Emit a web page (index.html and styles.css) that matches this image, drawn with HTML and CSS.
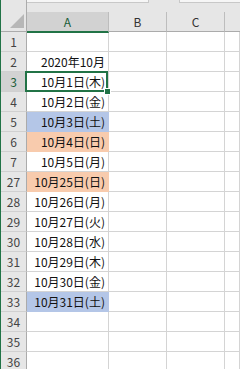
FILE: index.html
```html
<!DOCTYPE html>
<html lang="ja">
<head>
    <meta charset="UTF-8">
    <meta name="viewport" content="width=device-width, initial-scale=1.0">
    <title>2020年10月</title>
    <link rel="stylesheet" href="styles.css">
</head>
<body>
    <div class="window">
        <div class="topbar">
            <span class="fx-box"></span>
            <span class="fx-gap"></span>
            <span class="fx-box right"></span>
        </div>

        <div class="sheet">
            <!-- column headers -->
            <div class="corner">
                <svg width="14" height="14" viewBox="0 0 14 14"><polygon points="14,0 14,14 0,14" fill="#b7b7b7"/></svg>
            </div>
            <div class="col-head active">A</div>
            <div class="col-head">B</div>
            <div class="col-head">C</div>
            <div class="col-head last"></div>

            <div class="row-head">1</div><div class="cell"></div><div class="cell"></div><div class="cell"></div><div class="cell"></div>
            <div class="row-head">2</div><div class="cell">2020年10月</div><div class="cell"></div><div class="cell"></div><div class="cell"></div>
            <div class="row-head active">3</div><div class="cell selected">10月1日(木)<span class="sel-box"><span class="handle"></span></span></div><div class="cell"></div><div class="cell"></div><div class="cell"></div>
            <div class="row-head">4</div><div class="cell">10月2日(金)</div><div class="cell"></div><div class="cell"></div><div class="cell"></div>
            <div class="row-head">5</div><div class="cell sat">10月3日(土)</div><div class="cell"></div><div class="cell"></div><div class="cell"></div>
            <div class="row-head">6</div><div class="cell sun">10月4日(日)</div><div class="cell"></div><div class="cell"></div><div class="cell"></div>
            <div class="row-head">7</div><div class="cell">10月5日(月)</div><div class="cell"></div><div class="cell"></div><div class="cell"></div>
            <div class="row-head">27</div><div class="cell sun">10月25日(日)</div><div class="cell"></div><div class="cell"></div><div class="cell"></div>
            <div class="row-head">28</div><div class="cell">10月26日(月)</div><div class="cell"></div><div class="cell"></div><div class="cell"></div>
            <div class="row-head">29</div><div class="cell">10月27日(火)</div><div class="cell"></div><div class="cell"></div><div class="cell"></div>
            <div class="row-head">30</div><div class="cell">10月28日(水)</div><div class="cell"></div><div class="cell"></div><div class="cell"></div>
            <div class="row-head">31</div><div class="cell">10月29日(木)</div><div class="cell"></div><div class="cell"></div><div class="cell"></div>
            <div class="row-head">32</div><div class="cell">10月30日(金)</div><div class="cell"></div><div class="cell"></div><div class="cell"></div>
            <div class="row-head">33</div><div class="cell sat">10月31日(土)</div><div class="cell"></div><div class="cell"></div><div class="cell"></div>
            <div class="row-head">34</div><div class="cell"></div><div class="cell"></div><div class="cell"></div><div class="cell"></div>
            <div class="row-head">35</div><div class="cell"></div><div class="cell"></div><div class="cell"></div><div class="cell"></div>
            <div class="row-head">36</div><div class="cell"></div><div class="cell"></div><div class="cell"></div><div class="cell"></div>
        </div>
    </div>
</body>
</html>
```

FILE: styles.css
```css
html, body {
    margin: 0;
    height: 100%;
    overflow: hidden;
    background: #fff;
}

body {
    font-family: "Noto Sans CJK JP", "Noto Sans", sans-serif;
    font-size: 12px;
    color: #222;
}

.window {
    height: 100%;
    border-left: 1px solid #217346;
    background: #fff;
}

/* remains of the formula bar */
.topbar {
    height: 12px;
    background: #e6e6e6;
    display: flex;
    align-items: flex-start;
}

.fx-box {
    width: 147px;
    height: 2px;
    background: #f6f6f6;
    border-bottom: 1px solid #c8c8c8;
    border-right: 1px solid #c8c8c8;
}

.fx-gap {
    width: 30px;
}

.fx-box.right {
    flex: 1;
    border-left: 1px solid #c8c8c8;
    border-right: none;
}

.sheet {
    display: grid;
    grid-template-columns: 26px 82px 58px 58px 1fr;
    grid-auto-rows: 20px;
}

.corner {
    background: #e6e6e6;
    border-right: 1px solid #ababab;
    border-bottom: 1px solid #ababab;
    display: flex;
    justify-content: flex-end;
    align-items: flex-end;
    padding: 0 2px 3px 0;
    box-sizing: border-box;
    margin-top: -12px;
    height: 32px;
}

.col-head {
    background: #e6e6e6;
    border-right: 1px solid #bdbdbd;
    border-bottom: 1px solid #ababab;
    display: flex;
    justify-content: center;
    align-items: center;
    color: #333;
    box-sizing: border-box;
}

.col-head.active {
    background: #d2d2d2;
    color: #185c37;
    border-bottom: 2px solid #217346;
    height: 21px;
    position: relative;
    z-index: 1;
}

.col-head.last {
    border-right: none;
}

.row-head {
    background: #e6e6e6;
    border-right: 1px solid #ababab;
    border-bottom: 1px solid #d0d0d0;
    display: flex;
    justify-content: center;
    align-items: center;
    color: #444;
    box-sizing: border-box;
}

.row-head.active {
    background: #d2d2d2;
    color: #185c37;
}

.cell {
    border-right: 1px solid #d4d4d4;
    border-bottom: 1px solid #d4d4d4;
    display: flex;
    justify-content: flex-end;
    align-items: center;
    padding-right: 3px;
    box-sizing: border-box;
    white-space: nowrap;
    color: #111;
}

.cell.sat {
    background: #b4c6e7;
    border-color: #b4c6e7;
}

.cell.sun {
    background: #f8cbad;
    border-color: #f8cbad;
}

.cell.selected {
    position: relative;
}

.sel-box {
    position: absolute;
    left: -2px;
    top: -1px;
    right: 0;
    bottom: -1px;
    border: 2px solid #217346;
}

.handle {
    position: absolute;
    right: -4px;
    bottom: -4px;
    width: 5px;
    height: 5px;
    background: #217346;
    box-shadow: 0 0 0 1px #fff;
}
```
